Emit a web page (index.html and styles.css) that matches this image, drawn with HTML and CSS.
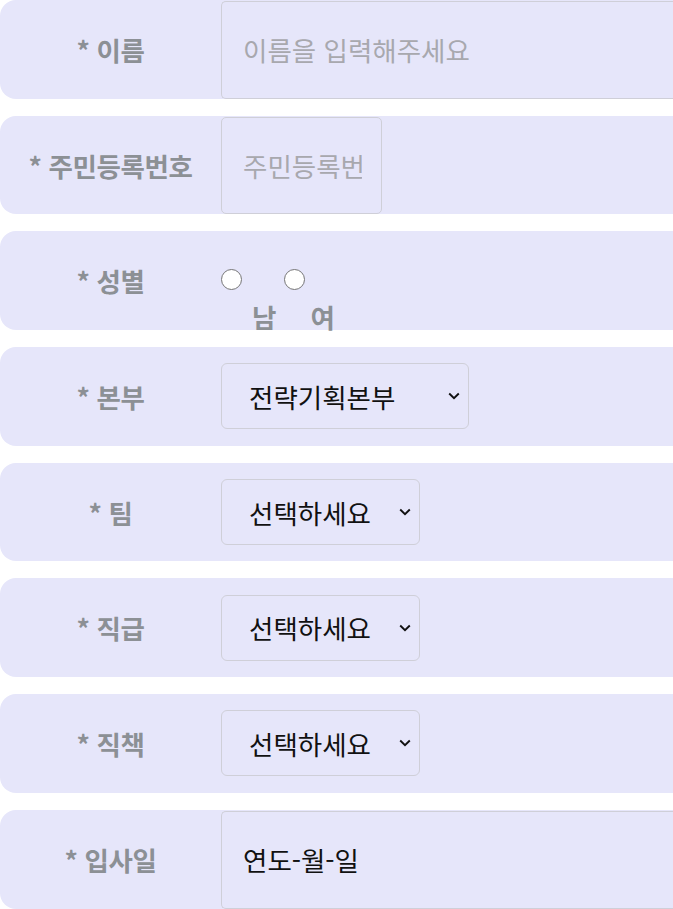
FILE: index.html
```html
<!DOCTYPE html>
<html lang="ko">
<head>
<meta charset="utf-8">
<link rel="stylesheet" href="styles.css">
</head>
<body>
<form class="form">
  <div class="row">
    <label class="label">* 이름</label>
    <input class="field field-wide" type="text" placeholder="이름을 입력해주세요">
  </div>
  <div class="row">
    <label class="label">* 주민등록번호</label>
    <input class="field field-short" type="text" placeholder="주민등록번호">
  </div>
  <div class="row row-top">
    <label class="label label-mid">* 성별</label>
    <div class="gender">
      <div class="radios">
        <input class="radio" type="radio" name="g">
        <input class="radio" type="radio" name="g">
      </div>
      <div class="radio-labels">
        <span class="rlabel">남</span>
        <span class="rlabel">여</span>
      </div>
    </div>
  </div>
  <div class="row">
    <label class="label">* 본부</label>
    <div class="select select-lg"><span>전략기획본부</span><svg class="chev" viewBox="0 0 12 8" width="12" height="8"><path d="M1.2 1.5 6 6.2 10.8 1.5" fill="none" stroke="#111" stroke-width="1.9"/></svg></div>
  </div>
  <div class="row">
    <label class="label">* 팀</label>
    <div class="select"><span>선택하세요</span><svg class="chev" viewBox="0 0 12 8" width="12" height="8"><path d="M1.2 1.5 6 6.2 10.8 1.5" fill="none" stroke="#111" stroke-width="1.9"/></svg></div>
  </div>
  <div class="row">
    <label class="label">* 직급</label>
    <div class="select"><span>선택하세요</span><svg class="chev" viewBox="0 0 12 8" width="12" height="8"><path d="M1.2 1.5 6 6.2 10.8 1.5" fill="none" stroke="#111" stroke-width="1.9"/></svg></div>
  </div>
  <div class="row">
    <label class="label">* 직책</label>
    <div class="select"><span>선택하세요</span><svg class="chev" viewBox="0 0 12 8" width="12" height="8"><path d="M1.2 1.5 6 6.2 10.8 1.5" fill="none" stroke="#111" stroke-width="1.9"/></svg></div>
  </div>
  <div class="row">
    <label class="label">* 입사일</label>
    <div class="field field-wide field-date">연도-월-일</div>
  </div>
</form>
</body>
</html>
```
FILE: styles.css
```css
html, body {
  margin: 0;
  padding: 0;
  background: #ffffff;
  overflow: hidden;
}
body {
  font-family: "Noto Sans CJK KR", "Noto Sans", sans-serif;
}
.form {
  display: flex;
  flex-direction: column;
  gap: 17px;
}
.row {
  display: flex;
  align-items: center;
  height: 98.7px;
  background: #e6e6fa;
  border-radius: 16px 0 0 16px;
}
.row-top {
  align-items: flex-start;
}
.label {
  flex: 0 0 221px;
  text-align: center;
  font-size: 26.5px;
  font-weight: 700;
  color: #8c9095;
  letter-spacing: -0.4px;
}
.label-mid {
  align-self: center;
}
.field {
  box-sizing: border-box;
  align-self: stretch;
  margin: 1px 0 0;
  height: 97.7px;
  border: 1px solid #cfcfd8;
  border-radius: 5px;
  background: transparent;
  padding: 0 0 0 21px;
  font-family: inherit;
  font-size: 26.5px;
  color: #111;
  outline: none;
  min-width: 0;
}
.field::placeholder {
  color: #a8a8ae;
}
.field-wide {
  flex: 1 1 auto;
  border-right: none;
  border-radius: 5px 0 0 5px;
}
.field-short {
  width: 161px;
  flex: 0 0 161px;
  padding-right: 19px;
}
.field-date {
  display: flex;
  align-items: center;
}
.gender {
  display: flex;
  flex-direction: column;
  padding-top: 38px;
}
.radios {
  display: flex;
  gap: 42px;
}
.radio {
  appearance: none;
  -webkit-appearance: none;
  box-sizing: border-box;
  margin: 0;
  width: 21px;
  height: 21px;
  border-radius: 50%;
  border: 1.7px solid #767676;
  background: #fff;
}
.radio-labels {
  display: flex;
  gap: 34px;
  padding-left: 31px;
  margin-top: 7px;
}
.rlabel {
  font-size: 26.5px;
  font-weight: 700;
  color: #8c9095;
  line-height: 40px;
}
.select {
  box-sizing: border-box;
  display: flex;
  align-items: center;
  justify-content: space-between;
  width: 199px;
  height: 66px;
  border: 1px solid #cfcfd8;
  border-radius: 6px;
  padding: 0 8px 0 27px;
  font-size: 26.5px;
  color: #111;
}
.select-lg {
  width: 248px;
}
.chev {
  display: block;
}
```
